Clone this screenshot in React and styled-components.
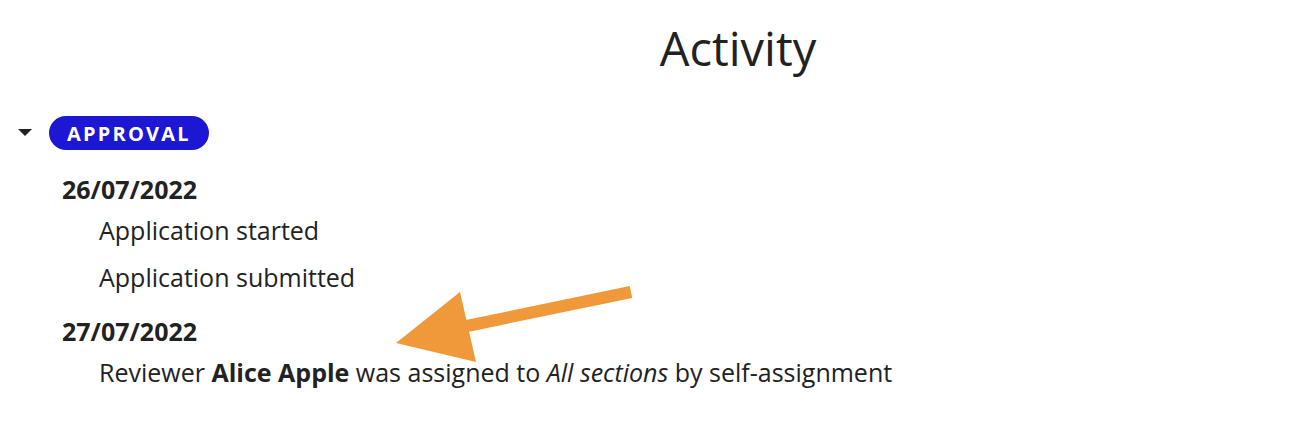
import React from 'react';
import styled, { createGlobalStyle } from 'styled-components';

const GlobalStyle = createGlobalStyle`
  body {
    margin: 0;
    background: #fff;
    font-family: "Open Sans", "Noto Sans", sans-serif;
    color: #222;
  }
`;

const Page = styled.div`
  position: relative;
  width: 1292px;
  height: 434px;
  overflow: hidden;
`;

const Title = styled.h1`
  margin: 0;
  padding: 17px 0 0 184px;
  text-align: center;
  font-size: 47px;
  font-weight: 400;
  line-height: 62px;
  color: #222;
`;

const Section = styled.div`
  padding: 37px 0 0 18px;
`;

const SectionHeader = styled.div`
  display: flex;
  align-items: center;
  gap: 17px;
`;

const Caret = styled.span`
  width: 0;
  height: 0;
  border-left: 7px solid transparent;
  border-right: 7px solid transparent;
  border-top: 7px solid #222;
  margin-top: -2px;
`;

const Badge = styled.span`
  display: inline-flex;
  align-items: center;
  height: 34px;
  padding: 0 18px;
  border-radius: 17px;
  background: #1c17d2;
  color: #fff;
  font-size: 20px;
  font-weight: 700;
  letter-spacing: 2.2px;
`;

const Group = styled.div`
  padding-left: 44px;
  margin-top: ${({ first }) => (first ? '21px' : '12px')};
`;

const DateLabel = styled.div`
  font-size: 25px;
  font-weight: 700;
  line-height: 36px;
`;

const Entry = styled.div`
  padding-left: 37px;
  font-size: 25px;
  line-height: 47px;
`;

const Arrow = styled.svg`
  position: absolute;
  left: 0;
  top: 0;
  pointer-events: none;
`;

export default function App() {
  return (
    <Page>
      <GlobalStyle />
      <Title>Activity</Title>
      <Section>
        <SectionHeader>
          <Caret />
          <Badge>APPROVAL</Badge>
        </SectionHeader>
        <Group first>
          <DateLabel>26/07/2022</DateLabel>
          <Entry>Application started</Entry>
          <Entry>Application submitted</Entry>
        </Group>
        <Group>
          <DateLabel>27/07/2022</DateLabel>
          <Entry>
            Reviewer <b>Alice Apple</b> was assigned to <i>All sections</i> by self-assignment
          </Entry>
        </Group>
      </Section>
      <Arrow width="1292" height="434" viewBox="0 0 1292 434">
        <line x1="631" y1="292" x2="462" y2="327" stroke="#f0993a" strokeWidth="12" />
        <polygon points="396,343 460,292 476,362" fill="#f0993a" />
      </Arrow>
    </Page>
  );
}
